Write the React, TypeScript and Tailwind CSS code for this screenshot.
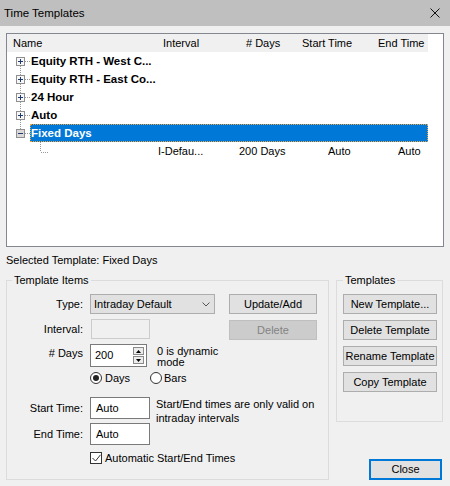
import React from "react";

function Expander({ first, last, minus }: { first?: boolean; last?: boolean; minus?: boolean }) {
  return (
    <svg width="23" height="18" className="shrink-0 block">
      {!first && <line x1="13.5" y1="0" x2="13.5" y2="5" stroke="#9a9a9a" strokeDasharray="1 1" />}
      {!last && <line x1="13.5" y1="14" x2="13.5" y2="18" stroke="#9a9a9a" strokeDasharray="1 1" />}
      <line x1="18" y1="9.5" x2="23" y2="9.5" stroke="#9a9a9a" strokeDasharray="1 1" />
      <rect x="9.5" y="5.5" width="8" height="8" fill={minus ? "#d9d9d9" : "#f7f7f7"} stroke="#8f8f8f" />
      <line x1="11" y1="9.5" x2="16" y2="9.5" stroke="#1f3a6b" />
      {!minus && <line x1="13.5" y1="7" x2="13.5" y2="12" stroke="#1f3a6b" />}
    </svg>
  );
}

function TreeRow({
  label,
  first,
  last,
  selected,
}: {
  label: string;
  first?: boolean;
  last?: boolean;
  selected?: boolean;
}) {
  return (
    <div className="flex items-center h-[18px] w-[421px]">
      <Expander first={first} last={last} minus={selected} />
      <div
        className={
          selected
            ? "flex-1 h-[18px] flex items-center border border-dotted border-[#f2a33a] bg-[#0078d7] text-white font-bold text-[11.5px] whitespace-nowrap"
            : "flex-1 h-[18px] flex items-center border border-transparent font-bold text-[11.5px] whitespace-nowrap"
        }
      >
        {label}
      </div>
    </div>
  );
}

function Btn({ children, disabled }: { children: React.ReactNode; disabled?: boolean }) {
  return (
    <div
      className={
        disabled
          ? "h-[20px] w-full border border-[#bfbfbf] bg-[#cccccc] text-[#838383] flex items-center justify-center whitespace-nowrap"
          : "h-[20px] w-full border border-[#adadad] bg-[#e1e1e1] flex items-center justify-center whitespace-nowrap"
      }
    >
      {children}
    </div>
  );
}

export default function App() {
  return (
    <div className="w-[450px] h-[486px] bg-[#f0f0f0] flex flex-col font-['Liberation_Sans',Arial,sans-serif] text-[11px] leading-[13px] text-black overflow-hidden">
      {/* Title bar */}
      <div className="h-[26px] shrink-0 bg-[#bfbfbf] flex items-center justify-between pl-[4px] pr-[10px]">
        <span className="text-[11.5px]">Time Templates</span>
        <svg width="10" height="10" className="block">
          <path d="M0.5 0.5 L9.5 9.5 M9.5 0.5 L0.5 9.5" stroke="#111" strokeWidth="1" fill="none" />
        </svg>
      </div>

      {/* Tree list */}
      <div className="mx-[6px] mt-[7px] h-[214px] shrink-0 border border-[#828790] bg-white">
        <div className="w-[421px] h-[18px] bg-[#f0f0f0] flex items-center whitespace-nowrap">
          <span className="w-[156px] pl-[6px]">Name</span>
          <span className="w-[83px]">Interval</span>
          <span className="w-[56px]">
            # Days
          </span>
          <span className="w-[76px]">Start Time</span>
          <span>End Time</span>
        </div>
        <TreeRow label="Equity RTH - West C..." first />
        <TreeRow label="Equity RTH - East Co..." />
        <TreeRow label="24 Hour" />
        <TreeRow label="Auto" />
        <TreeRow label="Fixed Days" last selected />
        <div className="flex items-center h-[18px] w-[421px] whitespace-nowrap">
          <svg width="50" height="18" className="shrink-0 block">
            <line x1="33.5" y1="0" x2="33.5" y2="10" stroke="#9a9a9a" strokeDasharray="1 1" />
            <line x1="34" y1="10.5" x2="41" y2="10.5" stroke="#9a9a9a" strokeDasharray="1 1" />
          </svg>
          <span className="w-[101px]" />
          <span className="w-[81px]">I-Defau...</span>
          <span className="w-[89px]">200 Days</span>
          <span className="w-[70px]">Auto</span>
          <span>Auto</span>
        </div>
      </div>

      <div className="mx-[6px] mt-[7px] h-[13px] shrink-0">Selected Template: Fixed Days</div>

      {/* Lower area */}
      <div className="flex mt-[7px] pl-[6px] gap-[7px] h-[206px] shrink-0">
        {/* Template Items */}
        <fieldset className="w-[323px] h-[206px] border border-[#dcdcdc] shrink-0">
          <legend className="ml-[5px] px-[2px] leading-[13px]">Template Items</legend>
          <div className="flex flex-col">
            {/* Type */}
            <div className="mt-[7px] flex items-center h-[20px]">
              <span className="w-[76px] text-right">Type:</span>
              <div className="ml-[7px] w-[125px] h-[20px] border border-[#adadad] bg-[#e1e1e1] flex items-center justify-between pl-[3px] pr-[4px]">
                <span>Intraday Default</span>
                <svg width="8" height="5" className="block">
                  <path d="M0.5 0.5 L4 4 L7.5 0.5" stroke="#555" fill="none" />
                </svg>
              </div>
              <div className="ml-[14px] w-[88px]">
                <Btn>Update/Add</Btn>
              </div>
            </div>
            {/* Interval */}
            <div className="mt-[5px] flex items-center h-[20px]">
              <span className="w-[76px] text-right">Interval:</span>
              <div className="ml-[8px] w-[59px] h-[20px] border border-[#cccccc] bg-[#f0f0f0]" />
              <div className="ml-[79px] w-[88px] mt-[2px]">
                <Btn disabled>Delete</Btn>
              </div>
            </div>
            {/* # Days */}
            <div className="mt-[5px] flex items-start h-[23px]">
              <span className="w-[76px] text-right pt-[3px]"># Days</span>
              <div className="ml-[7px] w-[57px] h-[23px] border border-[#7a7a7a] bg-white flex items-center pl-[4px] pr-[2px]">
                <span className="flex-1">200</span>
                <div className="flex flex-col gap-[1px]">
                  <div className="w-[11px] h-[8px] border border-[#8a8a8a] bg-[#ececec] flex items-center justify-center">
                    <svg width="5" height="3" className="block">
                      <polygon points="0,3 5,3 2.5,0" fill="#000" />
                    </svg>
                  </div>
                  <div className="w-[11px] h-[8px] border border-[#8a8a8a] bg-[#ececec] flex items-center justify-center">
                    <svg width="5" height="3" className="block">
                      <polygon points="0,0 5,0 2.5,3" fill="#000" />
                    </svg>
                  </div>
                </div>
              </div>
              <div className="ml-[10px] mt-[2px] leading-[11px] whitespace-nowrap">
                0 is dynamic
                <br />
                mode
              </div>
            </div>
            {/* Radios */}
            <div className="mt-[5px] flex items-center h-[12px]">
              <span className="w-[83px]" />
              <div className="w-[60px] flex items-center">
                <div className="w-[12px] h-[12px] rounded-full border border-[#333] bg-white flex items-center justify-center">
                  <div className="w-[6px] h-[6px] rounded-full bg-[#222]" />
                </div>
                <span className="ml-[3px]">Days</span>
              </div>
              <div className="flex items-center">
                <div className="w-[12px] h-[12px] rounded-full border border-[#333] bg-white" />
                <span className="ml-[2px]">Bars</span>
              </div>
            </div>
            {/* Start Time */}
            <div className="mt-[13px] flex items-start h-[22px]">
              <span className="w-[76px] h-[22px] flex items-center justify-end">Start Time:</span>
              <div className="ml-[7px] w-[60px] h-[22px] border border-[#7a7a7a] bg-white flex items-center pl-[5px]">
                Auto
              </div>
              <div className="ml-[6px] leading-[14px] whitespace-nowrap">
                Start/End times are only valid on
                <br />
                intraday intervals
              </div>
            </div>
            {/* End Time */}
            <div className="mt-[4px] flex items-center h-[22px]">
              <span className="w-[76px] text-right">End Time:</span>
              <div className="ml-[7px] w-[60px] h-[22px] border border-[#7a7a7a] bg-white flex items-center pl-[5px]">
                Auto
              </div>
            </div>
            {/* Checkbox */}
            <div className="mt-[7px] flex items-center h-[12px]">
              <span className="w-[83px]" />
              <div className="w-[12px] h-[12px] border border-[#333] bg-white flex items-center justify-center">
                <svg width="9" height="8" className="block">
                  <path d="M0.5 4 L3.5 7 L8.5 0.8" stroke="#333" strokeWidth="1" fill="none" />
                </svg>
              </div>
              <span className="ml-[3px]">Automatic Start/End Times</span>
            </div>
          </div>
        </fieldset>

        {/* Right column */}
        <div className="w-[107px] h-[206px] flex flex-col shrink-0">
          <fieldset className="w-[107px] h-[148px] border border-[#dcdcdc]">
            <legend className="ml-[6px] px-[2px] leading-[13px]">Templates</legend>
            <div className="mt-[7px] ml-[6px] w-[94px] flex flex-col gap-[6px]">
              <Btn>New Template...</Btn>
              <Btn>Delete Template</Btn>
              <Btn>Rename Template</Btn>
              <Btn>Copy Template</Btn>
            </div>
          </fieldset>
          <div className="mt-auto ml-[33px] w-[73px] h-[21px] border-2 border-[#0078d7] bg-[#e1e1e1] flex items-center justify-center">
            Close
          </div>
        </div>
      </div>
    </div>
  );
}
